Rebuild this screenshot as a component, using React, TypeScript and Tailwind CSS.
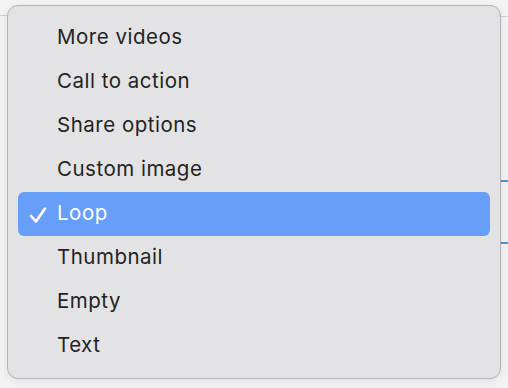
export default function App() {
  const items = [
    "More videos",
    "Call to action",
    "Share options",
    "Custom image",
    "Loop",
    "Thumbnail",
    "Empty",
    "Text",
  ];
  const selected = "Loop";

  return (
    <div className="relative w-[508px] h-[388px] bg-[#f3f3f3] overflow-hidden">
      {/* bits of the page underneath the menu */}
      <div className="absolute left-0 top-[15px] w-[10px] h-px bg-[#c9ced4]" />
      <div className="absolute right-0 top-[16px] w-[10px] h-px bg-[#c9d3dd]" />
      <div className="absolute right-0 top-[180px] w-[8px] h-[2px] bg-[#4a97d2]" />
      <div className="absolute right-0 top-[242px] w-[8px] h-[2px] bg-[#4a97d2]" />

      <div
        className="absolute left-[7px] top-[5px] w-[494px] h-[374px] rounded-[11px] bg-[#e3e3e5] border border-[#b4b4b6] shadow-[0_2px_8px_rgba(0,0,0,0.08)] pt-[10px] px-[10px]"
        style={{ fontFamily: "Inter, 'Noto Sans', sans-serif" }}
      >
        <ul className="flex flex-col">
          {items.map((item) => {
            const active = item === selected;
            return (
              <li
                key={item}
                className={`relative h-[44px] flex items-center pl-[39px] pb-[2px] text-[20.5px] tracking-[0.5px] rounded-[6px] ${
                  active ? "bg-[#679ef9] text-white" : "text-[#232323]"
                }`}
              >
                {active && (
                  <svg
                    className="absolute left-[10px] top-[14px] w-[20px] h-[18px]"
                    viewBox="0 0 20 18"
                    fill="none"
                    stroke="white"
                    strokeWidth={2.6}
                    strokeLinecap="round"
                    strokeLinejoin="round"
                  >
                    <path d="M3 10 L8 15.5 L17 2.5" />
                  </svg>
                )}
                {item}
              </li>
            );
          })}
        </ul>
      </div>
    </div>
  );
}
